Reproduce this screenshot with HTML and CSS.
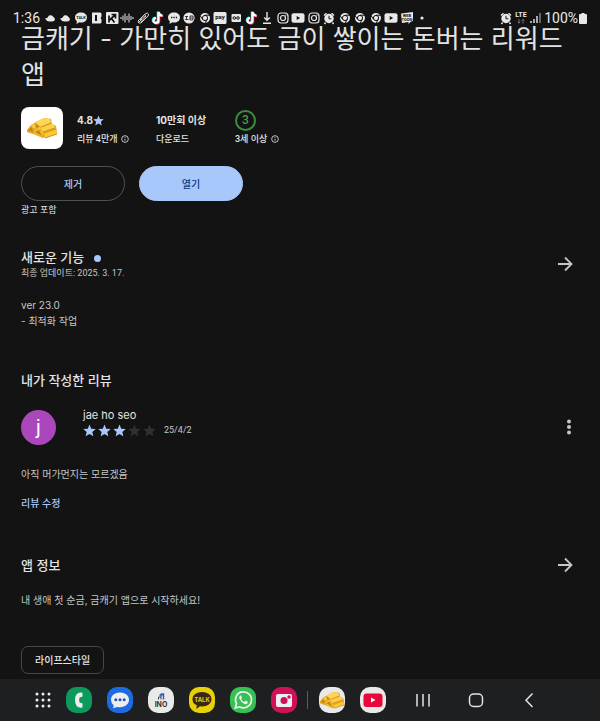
FILE: index.html
```html
<!DOCTYPE html>
<html lang="ko">
<head>
  <meta charset="UTF-8">
  <meta name="viewport" content="width=device-width, initial-scale=1.0">
  <title>금캐기</title>
  <link rel="stylesheet" href="styles.css">
</head>
<body>

  <!-- Shared icons -->
  <svg class="sprite" aria-hidden="true">
    <symbol id="star" viewBox="0 0 24 24"><path d="M12 1l3.200 7.600 8.300.7-6.300 5.400 1.900 8.100L12 18.500 4.900 22.800l1.900-8.100L.5 9.300l8.300-.7z" fill="currentColor"/></symbol>
    <symbol id="info" viewBox="0 0 24 24"><circle cx="12" cy="12" r="10" fill="none" stroke="currentColor" stroke-width="2.500"/><path d="M12 11v6M12 6.500v2.500" stroke="currentColor" stroke-width="2.500"/></symbol>
    <symbol id="arrow" viewBox="0 0 24 24"><path d="M5 12h13M12 5.500l6.500 6.500-6.500 6.500" fill="none" stroke="currentColor" stroke-width="1.800"/></symbol>
    <symbol id="gold" viewBox="0 0 42 42">
      <path d="M6 23l4-5 5-3 8-4 7 1 1 5 4 2 1 6-14 6-10-4-6-2z" fill="#e6a41d"/>
      <path d="M14 15l9-4 6 1 1 4-10 4z" fill="#fcd658"/>
      <path d="M10 18l5-2 5 3-1 3-8-1z" fill="#f7c63c"/>
      <path d="M19 21l11-4q4 0 4 4l-12 4z" fill="#fbd14a"/>
      <path d="M23 27l11-4q3 1 2 4l-12 4z" fill="#f9c93c"/>
      <path d="M13 23l5-1 5 4-2 4-8-3z" fill="#f3bb31"/>
      <path d="M14 16l5 4-4 1zM7 23l4-3 1 5zM14 25l4-2 3 6z" fill="#c58414"/>
      <path d="M20 20l10-4M22 25l12-4M24 31l12-4" stroke="#d1911b" fill="none"/>
    </symbol>
    <symbol id="cloud" viewBox="0 0 14 14"><path d="M2 7.500q3-.5 4-3 2.500-1 4 1 2 1 2 3.500-1.500 2-5 1.500Q4 11 2 7.500z" fill="currentColor"/></symbol>
    <symbol id="tiktok" viewBox="0 0 14 14">
      <path d="M7.500 1v8.500a2.500 2.500 0 1 1-2.500-2.500M7.500 1q.5 3.500 4 3.500" transform="translate(-.7 -.5)" fill="none" stroke="#25e5df" stroke-width="2.200"/>
      <path d="M7.500 1v8.500a2.500 2.500 0 1 1-2.500-2.500M7.500 1q.5 3.500 4 3.500" transform="translate(.7 .7)" fill="none" stroke="#f33155" stroke-width="2.200"/>
      <path d="M7.500 1v8.500a2.500 2.500 0 1 1-2.500-2.500M7.500 1q.5 3.500 4 3.500" fill="none" stroke="#fff" stroke-width="2.200"/>
    </symbol>
    <symbol id="chrome" viewBox="0 0 14 14"><circle cx="7" cy="7" r="5" fill="currentColor"/><circle cx="7" cy="7" r="2.600" fill="currentColor" stroke="#131313"/><path d="M7 4.200h5M4.600 8.400L2 4.500M9.400 8.400l-2.600 4" stroke="#131313"/></symbol>
    <symbol id="instagram" viewBox="0 0 14 14"><rect x="2" y="2" width="10" height="10" rx="3" fill="none" stroke="currentColor" stroke-width="1.200"/><circle cx="7" cy="7" r="2.500" fill="none" stroke="currentColor" stroke-width="1.200"/><circle cx="9.900" cy="4.100" r=".7" fill="currentColor"/></symbol>
    <symbol id="youtube" viewBox="0 0 14 14"><rect x=".5" y="2.300" width="13" height="9.400" rx="2" fill="currentColor"/><path d="M5.700 5v4l3.500-2z" fill="#131313"/></symbol>
    <symbol id="alarm" viewBox="0 0 14 14"><circle cx="7" cy="7.500" r="4.700" fill="currentColor"/><path d="M2 4.500l2.500-2.200M12 4.500L9.500 2.300M3.500 11.500l-1 1.500M10.500 11.500l1 1.500" stroke="currentColor" stroke-width="1.500"/><path d="M7 4.800v3h2.300" fill="none" stroke="#131313"/></symbol>
    <symbol id="chat" viewBox="0 0 14 14"><path d="M7 1.500c3.500 0 6 2 6 5s-2.500 5-6 5q-1 0-1.600-.2L2.500 13l.4-2.800Q1 8.800 1 6.500c0-3 2.500-5 6-5z" fill="currentColor"/></symbol>
  </svg>

  <!-- Status bar -->
  <header class="status-bar">
    <span class="clock">1:36</span>
    <div class="notices">
      <svg viewBox="0 0 14 14"><use href="#cloud"/></svg>
      <svg viewBox="0 0 14 14"><use href="#cloud"/></svg>
      <svg viewBox="0 0 14 14"><use href="#chat"/><text class="mark" x="7" y="8">TALK</text></svg>
      <svg viewBox="0 0 14 14"><path d="M3 1.500h8q1.500 0 1.500 1.500v2.500L11.500 7l1 1.500V11q0 1.500-1.500 1.500H3z" fill="currentColor"/><path d="M7 4v6" stroke="#131313" stroke-width="2"/></svg>
      <svg viewBox="0 0 14 14"><rect x="1" y="1" width="12.500" height="12" rx="1" fill="currentColor"/><path d="M4 4.500v7M4.500 9L10 4M6.500 7.500l3 4M6.500 3.500h4v4" fill="none" stroke="#131313" stroke-width="1.700"/></svg>
      <svg viewBox="0 0 14 14"><path d="M1 6v2M3 4.500v5M5 2.500v9M7 5v4M9 2.500v9M11 5v4M13 6v2" stroke="currentColor"/></svg>
      <svg viewBox="0 0 14 14"><path d="M2 10L9 3q3-2 3.500 0T10 7l-5 5q-3 1-3-2zM4 9l6-5M5 11l5-6M3 11l3-3" fill="none" stroke="currentColor" stroke-width=".9"/></svg>
      <svg viewBox="0 0 14 14"><use href="#tiktok"/></svg>
      <svg viewBox="0 0 14 14"><use href="#chat"/><path d="M4 6.500h1.300M6.400 6.500h1.300M8.800 6.500h1.300" stroke="#131313" stroke-width="1.300"/></svg>
      <svg viewBox="0 0 14 14"><circle cx="7" cy="7" r="5.600" fill="currentColor"/><path d="M3 5.500h3M4.500 5.500v3M3 8.500h3.500M8 5h3v4H8zM8 7h3" fill="none" stroke="#131313" stroke-width=".8"/></svg>
      <svg viewBox="0 0 14 14"><use href="#chrome"/></svg>
      <svg viewBox="0 0 14 14"><rect x=".5" y="1" width="13" height="12" rx="1.500" fill="currentColor"/><text class="mark mark-pay" x="7" y="8">pay</text></svg>
      <svg viewBox="0 0 14 14"><rect x="2.500" y="3" width="9.500" height="8" rx="1" fill="currentColor"/><circle cx="5.300" cy="7" r="1.300" fill="none" stroke="#131313"/><circle cx="9" cy="7" r="1.300" fill="none" stroke="#131313"/></svg>
      <svg viewBox="0 0 14 14"><use href="#tiktok"/></svg>
      <svg viewBox="0 0 14 14"><path d="M7 1v8M4.200 6.500L7 9.300l2.800-2.800M3 12.300h8" fill="none" stroke="currentColor" stroke-width="1.400"/></svg>
      <svg viewBox="0 0 14 14"><use href="#instagram"/></svg>
      <svg viewBox="0 0 14 14"><use href="#youtube"/></svg>
      <svg viewBox="0 0 14 14"><use href="#instagram"/></svg>
      <svg viewBox="0 0 14 14"><use href="#alarm"/></svg>
      <svg viewBox="0 0 14 14"><use href="#chrome"/></svg>
      <svg viewBox="0 0 14 14"><use href="#chrome"/></svg>
      <svg viewBox="0 0 14 14"><use href="#chrome"/></svg>
      <svg viewBox="0 0 14 14"><use href="#youtube"/></svg>
      <svg viewBox="0 0 14 14"><path d="M1 2.500l12-1.500v9l-2 .5-2.500 2.500v-2L2 12z" fill="currentColor"/><text class="mark" x="7" y="6">WEB</text><text class="mark" x="7" y="10">TOON</text></svg>
      <svg viewBox="0 0 14 14"><circle cx="7" cy="7" r="1.600" fill="currentColor"/></svg>
    </div>
    <div class="system">
      <svg class="system-icon" viewBox="0 0 14 14"><use href="#alarm"/></svg>
      <svg class="system-icon" viewBox="0 0 14 14"><text class="lte" x="7" y="6">LTE</text><path d="M5 8v4M3.700 10.800L5 12.200l1.300-1.400M9 12.500v-4M7.700 9.700L9 8.300l1.300 1.400" fill="none" stroke="#888" stroke-width=".8"/></svg>
      <svg class="system-icon" viewBox="0 0 14 14"><path d="M2 12v-2M5 12V8M8 12V5" stroke="currentColor" stroke-width="1.400"/><path d="M11 12V2" stroke="#888" stroke-width="1.400"/></svg>
      <span>100%</span>
      <svg class="battery" viewBox="0 0 8 12"><path d="M2.500 1h3v1H7q1 0 1 1v8q0 1-1 1H1q-1 0-1-1V3q0-1 1-1h1.500z" fill="currentColor"/></svg>
    </div>
  </header>

  <!-- Store page -->
  <main class="page">
    <h1>금캐기 - 가만히 있어도 금이 쌓이는 돈버는 리워드 앱</h1>

    <div class="summary">
      <svg class="app-icon" viewBox="0 0 42 42"><use href="#gold"/></svg>
      <div class="stat">
        <strong>4.8<svg class="rate-star"><use href="#star"/></svg></strong>
        <span>리뷰 4만개 <svg class="info"><use href="#info"/></svg></span>
      </div>
      <div class="stat">
        <strong>10만회 이상</strong>
        <span>다운로드</span>
      </div>
      <div class="stat">
        <strong><b class="age">3</b></strong>
        <span>3세 이상 <svg class="info"><use href="#info"/></svg></span>
      </div>
    </div>

    <div class="actions">
      <button class="btn">제거</button>
      <button class="btn btn-primary">열기</button>
    </div>
    <p class="ads">광고 포함</p>

    <section class="news">
      <div class="section-head">
        <div>
          <h2>새로운 기능 <i class="dot"></i></h2>
          <p class="updated">최종 업데이트: 2025. 3. 17.</p>
        </div>
        <button class="icon-btn" aria-label="새로운 기능"><svg><use href="#arrow"/></svg></button>
      </div>
      <p class="text">ver 23.0<br>- 최적화 작업</p>
    </section>

    <section class="my-review">
      <h2>내가 작성한 리뷰</h2>
      <div class="review">
        <div class="avatar">j</div>
        <div class="reviewer">
          <div class="name">jae ho seo</div>
          <div class="stars">
            <svg><use href="#star"/></svg>
            <svg><use href="#star"/></svg>
            <svg><use href="#star"/></svg>
            <svg class="off"><use href="#star"/></svg>
            <svg class="off"><use href="#star"/></svg>
            <time>25/4/2</time>
          </div>
        </div>
        <button class="icon-btn more" aria-label="더보기"><svg viewBox="0 0 24 24"><circle cx="12" cy="6.500" r="2"/><circle cx="12" cy="12" r="2"/><circle cx="12" cy="17.500" r="2"/></svg></button>
      </div>
      <p class="text">아직 머가먼지는 모르겠음</p>
      <a class="edit" href="#">리뷰 수정</a>
    </section>

    <section class="about">
      <div class="section-head">
        <h2>앱 정보</h2>
        <button class="icon-btn" aria-label="앱 정보"><svg><use href="#arrow"/></svg></button>
      </div>
      <p class="text">내 생애 첫 순금, 금캐기 앱으로 시작하세요!</p>
      <button class="chip">라이프스타일</button>
    </section>
  </main>

  <!-- Taskbar -->
  <nav class="taskbar">
    <button class="launcher" aria-label="앱스"><svg viewBox="0 0 26 26" fill="#eee"><circle cx="7" cy="7" r="1.500"/><circle cx="13" cy="7" r="1.500"/><circle cx="19" cy="7" r="1.500"/><circle cx="7" cy="13" r="1.500"/><circle cx="13" cy="13" r="1.500"/><circle cx="19" cy="13" r="1.500"/><circle cx="7" cy="19" r="1.500"/><circle cx="13" cy="19" r="1.500"/><circle cx="19" cy="19" r="1.500"/></svg></button>
    <div class="apps">
      <button class="phone" aria-label="전화"><svg viewBox="0 0 26 26"><path d="M15.500 5.500q-6.500-.5-6.500 7.500t6.500 7.800q1 0 1-1v-2.800q0-1-1-1l-1.800-.2q-1.200-2.800 0-5.600l1.800-.2q1 0 1-1V6.500q0-1-1-1z" fill="#eee"/></svg></button>
      <button class="messages" aria-label="메시지"><svg viewBox="0 0 26 26"><path d="M13 5.500c5 0 9 3 9 7.300s-4 7.400-9 7.400q-1.500 0-2.700-.3L6 21.300l.7-3Q4 16.300 4 12.800c0-4.300 4-7.300 9-7.300z" fill="#eee"/><g fill="#1d54bd"><circle cx="8.800" cy="12.800" r="1.500"/><circle cx="13" cy="12.800" r="1.500"/><circle cx="17.200" cy="12.800" r="1.500"/></g></svg></button>
      <button class="ino" aria-label="INO"><svg viewBox="0 0 26 26"><path d="M10.500 12.500V10h2.500M13 12.500V8h2" fill="none" stroke="#444"/><path d="M11.500 8.500l2-1.500h2v5.500" fill="none" stroke="#2457d6" stroke-width="1.400"/><text x="13" y="20">INO</text></svg></button>
      <button class="talk" aria-label="카카오톡"><svg viewBox="0 0 26 26"><path d="M13 5c5.500 0 9.500 3 9.500 7.200s-4 7.200-9.500 7.200l-2-.1L7.300 22l.5-3.700Q3.500 16.500 3.500 12.200C3.500 8 7.500 5 13 5z" fill="#3b2619"/><text x="13" y="15">TALK</text></svg></button>
      <button class="whatsapp" aria-label="WhatsApp"><svg viewBox="0 0 26 26"><path d="M5.300 21l1.200-4.300a8 8 0 1 1 3.100 3.100z" fill="none" stroke="#eee" stroke-width="1.700"/><path d="M10.300 8.500q-1.600 1-1 3 1.500 4 5.500 5.700 2 .4 3-1.500v-1l-2.300-1.100-1.200 1.300q-2.300-1-3.200-3l1-1.200-1-2.200z" fill="#eee"/></svg></button>
      <button class="camera" aria-label="카메라"><svg viewBox="0 0 26 26"><rect x="5" y="7" width="16" height="13" rx="2" fill="#eee"/><circle cx="13" cy="13.500" r="3.500" fill="#cf115a"/><circle cx="18" cy="10" r="1.700" fill="#cf115a"/></svg></button>
    </div>
    <div class="recent">
      <button class="gold" aria-label="금캐기"><svg viewBox="5 5 32 32"><use href="#gold" width="42" height="42"/></svg></button>
      <button class="tube" aria-label="YouTube"><svg viewBox="0 0 26 26"><rect x="3.500" y="6.500" width="19" height="13.500" rx="3" fill="#e8063a"/><path d="M11 10.500v5l4.500-2.500z" fill="#fff"/></svg></button>
    </div>
    <div class="system-keys">
      <button aria-label="최근 앱"><svg viewBox="0 0 26 26"><path d="M7 7v12.500M13 7v12.500M19 7v12.500"/></svg></button>
      <button aria-label="홈"><svg viewBox="0 0 26 26"><rect x="6.500" y="7" width="13" height="12.500" rx="4"/></svg></button>
      <button aria-label="뒤로"><svg viewBox="0 0 26 26"><path d="M16.500 6.500L10 13.200l6.500 6.700"/></svg></button>
    </div>
  </nav>

</body>
</html>
```
FILE: styles.css
```css
* {
  box-sizing: border-box;
}

body {
  display: flex;
  flex-direction: column;
  min-height: 100vh;
  margin: 0;
  background-color: #131313;
  color: #e3e3e3;
  font-family: Inter, "Noto Sans CJK KR", sans-serif;
  font-size: 10px;
  line-height: 16px;
}

h1, h2, p {
  margin: 0;
}

button {
  padding: 0;
  border: none;
  background: none;
  color: inherit;
  font: inherit;
  cursor: pointer;
}

svg {
  display: block;
}

.sprite {
  position: absolute;
  width: 0;
  height: 0;
}

/* Status bar */
.status-bar {
  display: flex;
  align-items: center;
  height: 26px;
  padding: 10px 13px 0;
  color: #e8e8e8;
  font-family: Roboto, sans-serif;
  font-size: 14px;
}

.clock {
  width: 29px;
}

.notices {
  display: grid;
  grid-template-columns: repeat(25, 1fr);
  justify-items: center;
  width: 388px;
}

.notices svg, .system-icon {
  width: 14px;
  height: 14px;
}

.mark {
  fill: #131313;
  font-size: 4px;
  font-weight: bold;
  text-anchor: middle;
}

.mark-pay {
  font-size: 6px;
}

.lte {
  fill: currentColor;
  font-size: 7px;
  font-weight: bold;
  text-anchor: middle;
}

.system {
  display: flex;
  align-items: center;
  gap: 1px;
  margin-left: auto;
}

.battery {
  width: 8px;
  height: 12px;
}

/* Store page, scrolled so that the title is cut at the top */
.page {
  overflow: hidden;
  padding: 0 23px 5px 21px;
}

h1 {
  margin-top: -5px;
  font-size: 26px;
  font-weight: 400;
  line-height: 36px;
}

h2 {
  font-size: 13px;
  font-weight: 500;
  line-height: 18px;
}

.summary {
  display: flex;
  margin-top: 14px;
}

.app-icon {
  width: 42px;
  height: 42px;
  margin-right: 14px;
  border-radius: 8px;
  background-color: #fff;
}

.stat {
  width: 79px;
  padding-top: 2px;
  font-size: 9px;
  font-weight: 500;
}

.stat strong {
  display: flex;
  align-items: center;
  height: 22px;
  font-size: 10px;
  font-weight: 700;
}

.stat span {
  display: flex;
  align-items: center;
  gap: 4px;
}

.stat span, .updated, .stars time {
  font-family: Roboto, "Noto Sans CJK KR", sans-serif;
}

.rate-star {
  width: 11px;
  height: 11px;
  color: #a8c7fa;
}

.info {
  width: 8px;
  height: 8px;
}

.age {
  width: 21px;
  height: 21px;
  border: 2px solid #388e3c;
  border-radius: 50%;
  color: #43a047;
  font-family: Roboto, sans-serif;
  font-size: 12px;
  font-weight: 500;
  line-height: 17px;
  text-align: center;
}

.actions {
  display: flex;
  gap: 14px;
  margin-top: 17px;
}

.btn {
  width: 104px;
  height: 35px;
  border: 1px solid #505152;
  border-radius: 18px;
  color: #a8c7fa;
  font-weight: 500;
}

.btn-primary {
  border-color: #a8c7fa;
  background-color: #a8c7fa;
  color: #0b3a7d;
}

.ads {
  margin-top: 1px;
  font-size: 9px;
}

.news {
  margin-top: 30px;
}

.section-head {
  display: flex;
  justify-content: space-between;
  align-items: center;
}

.dot {
  display: inline-block;
  width: 7px;
  height: 7px;
  margin-left: 6px;
  border-radius: 50%;
  background-color: #a8c7fa;
  vertical-align: middle;
}

.updated {
  color: #c4c7c5;
  font-size: 9px;
  line-height: 14px;
}

.text {
  color: #c4c7c5;
}

.news .text {
  margin-top: 17px;
}

.icon-btn {
  color: #c4c7c5;
}

.icon-btn svg {
  width: 24px;
  height: 24px;
  fill: currentColor;
}

.my-review {
  margin-top: 42px;
}

.review {
  display: flex;
  align-items: flex-end;
  margin-top: 19px;
}

.avatar {
  width: 35px;
  height: 35px;
  border-radius: 50%;
  background-color: #ab47bc;
  color: #fff;
  font-family: Roboto, sans-serif;
  font-size: 20px;
  line-height: 34px;
  text-align: center;
}

.reviewer {
  flex: 1;
  margin-left: 27px;
  padding-bottom: 7px;
}

.name {
  font-size: 11px;
  line-height: 14px;
}

.stars {
  display: flex;
  align-items: center;
  gap: 2px;
  height: 16px;
  color: #a8c7fa;
}

.stars svg {
  width: 13px;
  height: 13px;
}

.stars .off {
  color: #303030;
}

.stars time {
  margin-left: 6px;
  color: #c4c7c5;
  font-size: 9px;
}

.more {
  margin: 0 -4px 6px 0;
}

.my-review .text {
  margin-top: 21px;
}

.edit {
  display: inline-block;
  margin-top: 13px;
  color: #a8c7fa;
  font-weight: 500;
  text-decoration: none;
}

.about {
  margin-top: 42px;
}

.about .text {
  margin-top: 15px;
}

.chip {
  height: 28px;
  margin-top: 38px;
  padding: 0 13px;
  border: 1px solid #444746;
  border-radius: 7px;
  font-weight: 500;
}

/* Taskbar */
.taskbar {
  display: flex;
  align-items: center;
  height: 42px;
  margin-top: auto;
  padding-left: 30px;
  background-color: #1e1f21;
}

.taskbar button {
  width: 26px;
  height: 26px;
  border-radius: 10px;
}

.taskbar svg {
  width: 26px;
  height: 26px;
}

.apps, .recent {
  display: flex;
  gap: 15px;
}

.apps {
  margin-left: 10px;
}

.recent {
  position: relative;
  margin-left: 22px;
}

/* thin divider between pinned and recent apps */
.recent::before {
  content: "";
  position: absolute;
  top: 4px;
  left: -12px;
  width: 1px;
  height: 18px;
  background-color: #5a5b5d;
}

.phone {
  background-color: #0b9a5b;
}

.messages {
  background-color: #1d6be0;
}

.ino, .gold, .tube {
  background-color: #e9e9ea;
}

.talk {
  background-color: #e6d207;
}

.whatsapp {
  background-color: #35c153;
}

.camera {
  background-color: #cf115a;
}

.taskbar text {
  font-family: Inter, sans-serif;
  font-weight: bold;
  text-anchor: middle;
}

.ino text {
  fill: #333;
  font-size: 7px;
}

.talk text {
  fill: #e6d207;
  font-size: 6px;
}

.system-keys {
  display: flex;
  gap: 27px;
  margin-left: 24px;
}

.system-keys svg {
  fill: none;
  stroke: #e3e3e3;
  stroke-width: 1.5;
}
```
